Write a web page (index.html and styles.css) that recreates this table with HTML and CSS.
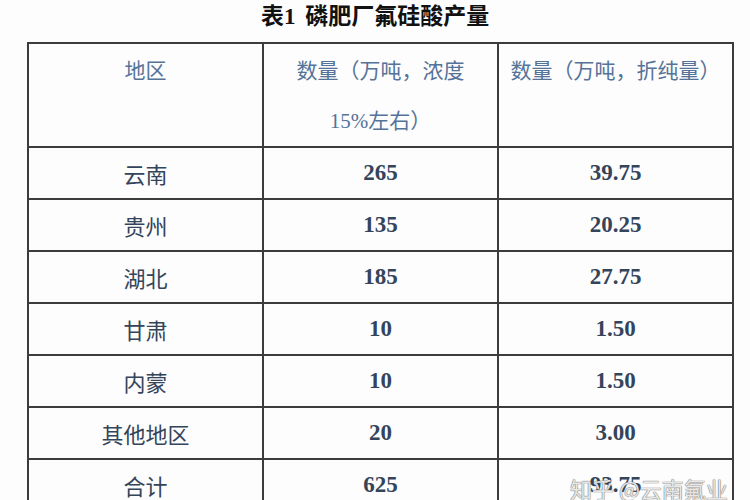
FILE: index.html
```html
<!DOCTYPE html>
<html lang="zh">
<head>
<meta charset="utf-8">
<link rel="stylesheet" href="styles.css">
</head>
<body>
<div class="page">
  <h1 class="title"><span class="num">表1</span> 磷肥厂氟硅酸产量</h1>
  <table class="tbl">
    <tr class="head">
      <td>地区</td>
      <td>数量（万吨，浓度<br>15%左右）</td>
      <td>数量（万吨，折纯量）</td>
    </tr>
    <tr><td>云南</td><td>265</td><td>39.75</td></tr>
    <tr><td>贵州</td><td>135</td><td>20.25</td></tr>
    <tr><td>湖北</td><td>185</td><td>27.75</td></tr>
    <tr><td>甘肃</td><td>10</td><td>1.50</td></tr>
    <tr><td>内蒙</td><td>10</td><td>1.50</td></tr>
    <tr><td>其他地区</td><td>20</td><td>3.00</td></tr>
    <tr><td>合计</td><td>625</td><td class="last">93.75</td></tr>
  </table>
  <div class="wm">知乎 @云南氟业</div>
</div>
</body>
</html>
```
FILE: styles.css
```css
html, body {
  margin: 0;
  padding: 0;
  background: #fdfdfd;
}
.page {
  position: relative;
  width: 750px;
  height: 500px;
  overflow: hidden;
  font-family: "Liberation Serif", "Noto Sans CJK SC", serif;
}
.title {
  margin: 0;
  height: 42px;
  line-height: 34px;
  text-align: center;
  font-size: 23px;
  font-weight: 700;
  color: #111;
  word-spacing: 4px;
}
.tbl {
  margin-left: 27px;
  width: 705px;
  border-collapse: collapse;
  table-layout: fixed;
}
.tbl td {
  width: 235px;
  height: 50px;
  border: 2px solid #3c3c3c;
  text-align: center;
  vertical-align: middle;
  font-size: 22px;
  font-weight: 400;
  color: #34445a;
  padding: 0;
}
.tbl td + td {
  font-weight: 700;
  font-size: 23px;
}
.tbl .head td {
  height: 98px;
  vertical-align: top;
  line-height: 50px;
  padding-top: 2px;
  color: #557399;
  font-weight: 400;
  font-size: 21px;
  box-sizing: border-box;
}
.wm {
  position: absolute;
  left: 570px;
  top: 472px;
  font-family: "Noto Sans CJK SC", sans-serif;
  font-size: 22px;
  color: rgba(255,255,255,0.85);
  text-shadow: 0 0 1px #666, 0 0 1px #666;
}
```
